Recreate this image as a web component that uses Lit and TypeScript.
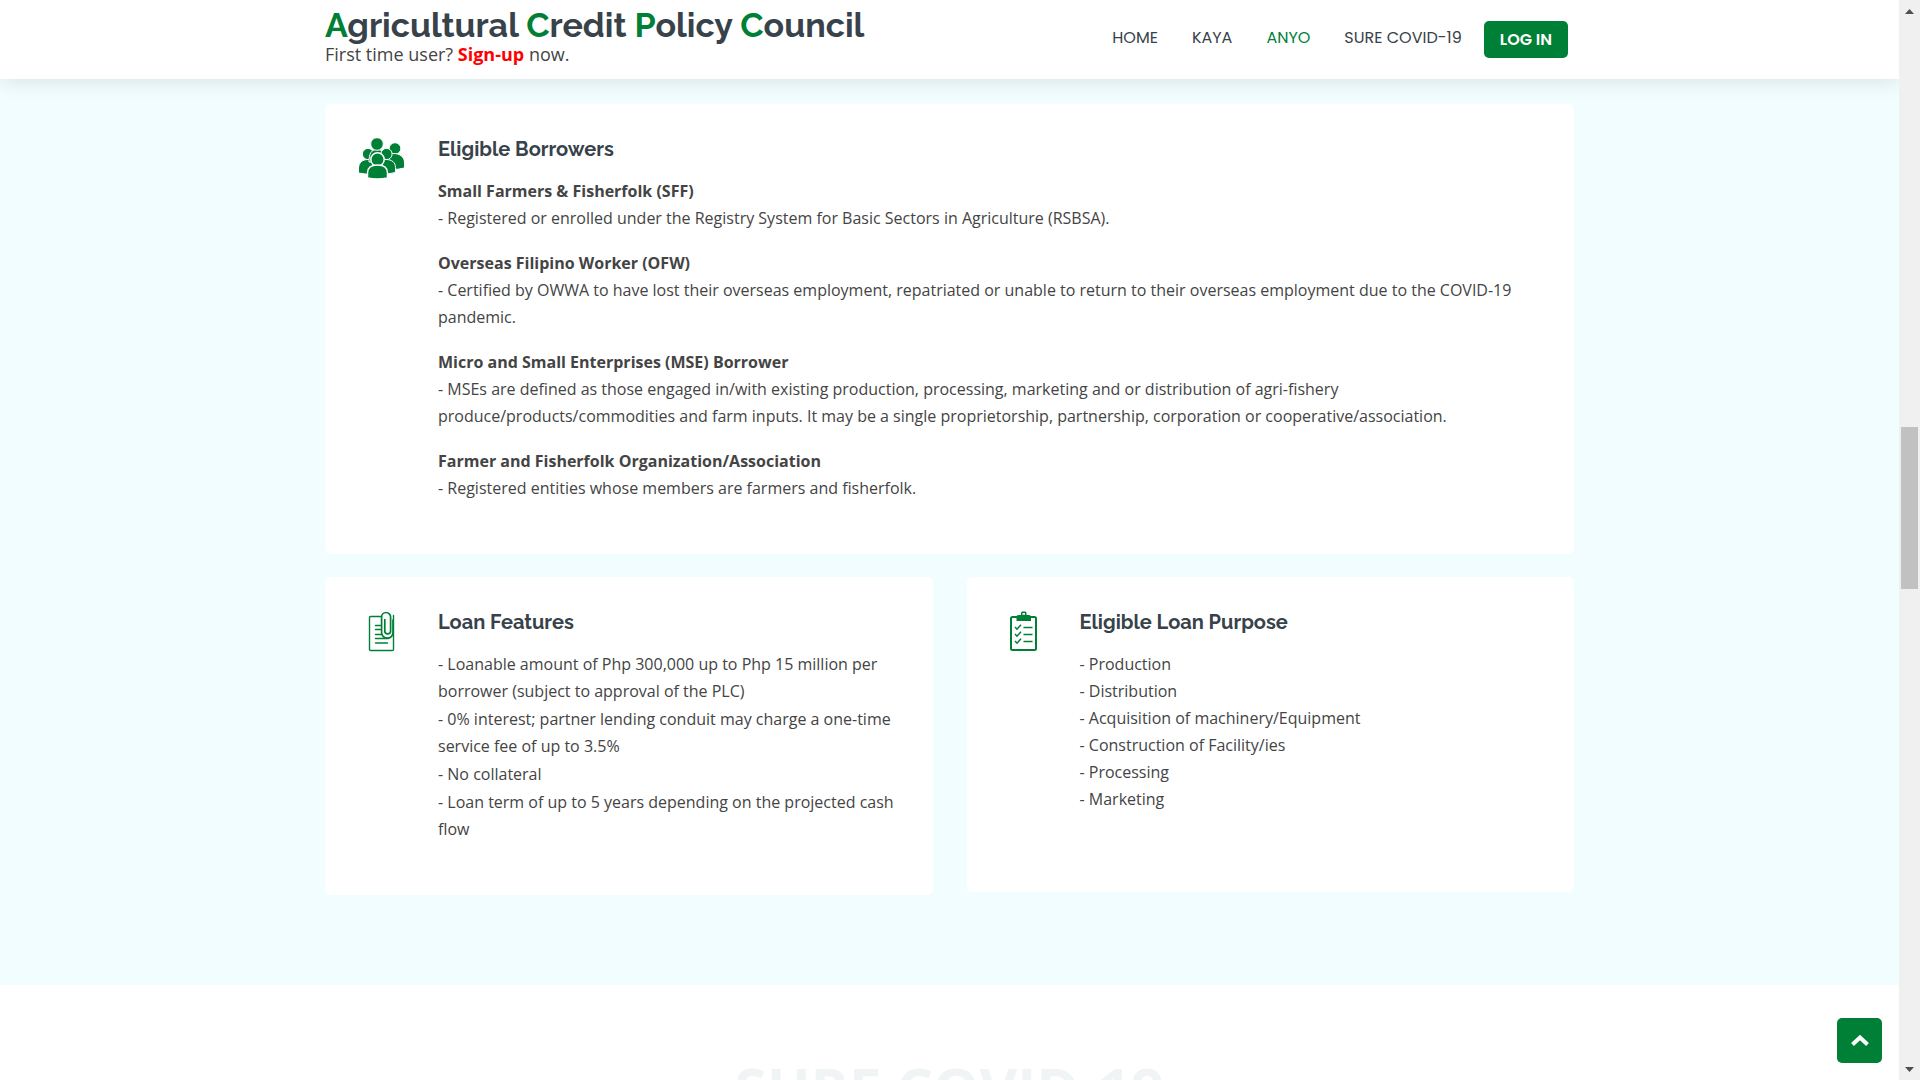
import { LitElement, html, svg, css } from "lit";
import { customElement, property } from "lit/decorators.js";

const people = svg`
  <svg viewBox="0 0 45 41" width="45" height="41" aria-hidden="true">
    <g fill="#008037" stroke="#fff" stroke-width="1">
      <circle cx="36" cy="10.5" r="5.8" />
      <path d="M26 30v-7c0-5 4-7.500 9-7.500s10.500 3 10.500 9v5.500q-8 2-12 1z" />
      <circle cx="9" cy="16" r="5.600" />
      <path d="M-.5 35v-4.500c0-6 4-9 9.500-9s9 3 9 8v6.500q-10 1-18.500-1z" />
      <path d="M10 24c0-8 2-12.500 8-12.500s8 4 8 12.500z" />
      <circle cx="18" cy="6" r="6.300" />
      <circle cx="27.500" cy="16" r="5.600" />
      <path d="M17 34v-4c0-5 4-8.500 10-8.500s9.500 3 9.500 8v5q-9 3-19.500 1z" />
    </g>
    <g fill="#008037" stroke="#fff" stroke-width="1.500">
      <circle cx="18.500" cy="21.500" r="6.700" />
      <path d="M8.500 40v-5c0-6 4-8 10-8s10 2 10 8v5q-10 2.200-20 0z" />
    </g>
  </svg>`;

const paper = svg`
  <svg viewBox="0 0 45 41" width="45" height="41" aria-hidden="true">
    <g fill="none" stroke="#008037" stroke-width="1.400" stroke-linecap="round">
      <path d="M22 5.500H11.500q-1 0-1 1v32q0 1 1 1h22q1 0 1-1V4.500" />
      <path d="M16.500 14.500h5M16.500 18.500h5M16.500 23.500h6M16.500 27.500h13M16.500 32h12" />
      <path d="M34 9v12.500a5.700 5.700 0 0 1-11.400 0V6a4.500 4.500 0 0 1 9 0v14a2.900 2.900 0 0 1-5.800 0V8.500" stroke-width="1.700" />
    </g>
  </svg>`;

const clipboard = svg`
  <svg viewBox="0 0 45 41" width="45" height="41" aria-hidden="true">
    <rect x="10" y="6" width="25" height="33" rx="1.500" fill="none" stroke="#008037" stroke-width="2" />
    <path d="M15.500 10V6q0-2 2-2h2.500V2q0-1.500 1.500-1.500h2.500q1.500 0 1.500 1.500v2h2.500q2 0 2 2v4z" fill="#008037" />
    <rect x="21.500" y="2" width="2.500" height="1.800" fill="#fff" />
    <g fill="none" stroke="#008037" stroke-width="1.500">
      <path d="M14 16l2 2.200 4-4.500M14 23l2 2.200 4-4.500M14 30l2 2.200 4-4.500" />
      <path d="M22.500 16.500h9M22.500 23.500h9M22.500 30.500h9" />
    </g>
  </svg>`;

const borrowers = [
  ["Small Farmers & Fisherfolk (SFF)", "- Registered or enrolled under the Registry System for Basic Sectors in Agriculture (RSBSA)."],
  ["Overseas Filipino Worker (OFW)", "- Certified by OWWA to have lost their overseas employment, repatriated or unable to return to their overseas employment due to the COVID-19 pandemic."],
  ["Micro and Small Enterprises (MSE) Borrower", "- MSEs are defined as those engaged in/with existing production, processing, marketing and or distribution of agri-fishery produce/products/commodities and farm inputs. It may be a single proprietorship, partnership, corporation or cooperative/association."],
  ["Farmer and Fisherfolk Organization/Association", "- Registered entities whose members are farmers and fisherfolk."],
];

const features = [
  "- Loanable amount of Php 300,000 up to Php 15 million per borrower (subject to approval of the PLC)",
  "- 0% interest; partner lending conduit may charge a one-time service fee of up to 3.5%",
  "- No collateral",
  "- Loan term of up to 5 years depending on the projected cash flow",
];

const purposes = [
  "- Production",
  "- Distribution",
  "- Acquisition of machinery/Equipment",
  "- Construction of Facility/ies",
  "- Processing",
  "- Marketing",
];

@customElement("info-card")
class InfoCard extends LitElement {
  @property() heading = "";

  static styles = css`
    :host {
      display: flex;
      gap: 34px;
      padding: 34px;
      background: #fff;
      border-radius: 5px;
    }
    .icon {
      flex: none;
      display: flex;
      align-items: flex-start;
    }
    .body {
      flex: 1;
      min-width: 0;
    }
    .heading {
      margin: 0 0 18px;
      font: 700 20px/22px Raleway, Lato, sans-serif;
      color: #37424a;
    }
  `;

  render() {
    return html`
      <div class="icon"><slot name="icon"></slot></div>
      <div class="body">
        <h4 class="heading">${this.heading}</h4>
        <slot></slot>
      </div>
    `;
  }
}

@customElement("app-root")
class AppRoot extends LitElement {
  static styles = css`
    :host {
      display: flex;
      height: 100vh;
      overflow: hidden;
      background: #fff;
      color: #444;
      font: 16px/27px "Open Sans", sans-serif;
    }
    * {
      box-sizing: border-box;
    }
    a {
      text-decoration: none;
    }
    .page {
      position: relative;
      flex: 1;
      min-width: 0;
      display: flex;
      flex-direction: column;
      overflow: hidden;
    }
    .container {
      width: 100%;
      max-width: 1249px;
      margin: 0 auto;
    }
    .header {
      position: relative;
      z-index: 1;
      flex: none;
      background: #fff;
      box-shadow: 0 3px 19px rgba(0, 0, 0, 0.1);
    }
    .bar {
      display: flex;
      justify-content: space-between;
      align-items: flex-start;
      padding: 7px 6px 14px 0;
    }
    .title {
      margin: 0;
      font: 700 34px/36px Raleway, Lato, sans-serif;
      color: #37424a;
    }
    .initial {
      color: #008037;
    }
    .tagline {
      margin: 0;
      font-size: 18px;
      line-height: 22px;
    }
    .signup {
      color: #f00;
      font-weight: 700;
    }
    .nav {
      display: flex;
      align-items: center;
      gap: 34px;
      padding-top: 14px;
      font: 400 16px/32px Poppins, Inter, sans-serif;
    }
    .link {
      padding-bottom: 4px;
      color: #37424a;
    }
    .link.active {
      color: #008037;
    }
    .login {
      margin: 0 0 0 -12px;
      padding: 0 16px;
      height: 37px;
      border: 0;
      border-radius: 5px;
      background: #008037;
      color: #fff;
      font: 600 16px/37px Poppins, Inter, sans-serif;
    }
    .program {
      flex: none;
      padding: 25px 0 90px;
      background: #f1fdff;
    }
    .cards {
      display: grid;
      grid-template-columns: 1fr 1fr;
      gap: 23px 34px;
      align-items: start;
    }
    .wide {
      grid-column: 1 / -1;
    }
    .text {
      margin: 0 0 18px;
    }
    .term {
      display: block;
      font-weight: 700;
    }
    .list {
      display: flex;
      flex-direction: column;
      list-style: none;
      margin: 0 0 18px;
      padding: 0;
    }
    .spaced {
      gap: 1px;
    }
    .trailing {
      padding-bottom: 27px;
    }
    .next {
      flex: none;
      padding-top: 63px;
    }
    .watermark {
      margin: 0;
      text-align: center;
      font-size: 58px;
      line-height: 80px;
      font-weight: 700;
      color: #f1f4f4;
    }
    .top {
      position: absolute;
      right: 17px;
      bottom: 17px;
      display: flex;
      align-items: center;
      justify-content: center;
      width: 45px;
      height: 45px;
      border-radius: 5px;
      background: #008037;
    }
    .scrollbar {
      flex: none;
      width: 21px;
      display: flex;
      flex-direction: column;
      align-items: center;
      padding: 9px 2px 8px;
      background: #f0f0f0;
    }
    .before {
      flex: 413;
    }
    .thumb {
      flex: 161;
      width: 17px;
      background: #c1c1c1;
    }
    .after {
      flex: 478;
    }
  `;

  render() {
    return html`
      <div class="page">
        <header class="header">
          <div class="container bar">
            <div>
              <h1 class="title">
                <span class="initial">A</span>gricultural <span class="initial">C</span>redit
                <span class="initial">P</span>olicy <span class="initial">C</span>ouncil
              </h1>
              <p class="tagline">First time user? <a class="signup" href="#signup">Sign-up</a> now.</p>
            </div>
            <nav class="nav">
              <a class="link" href="#home">HOME</a>
              <a class="link" href="#kaya">KAYA</a>
              <a class="link active" href="#anyo">ANYO</a>
              <a class="link" href="#sure">SURE COVID-19</a>
              <button class="login" type="button">LOG IN</button>
            </nav>
          </div>
        </header>
        <section class="program">
          <div class="container cards">
            <info-card class="wide" heading="Eligible Borrowers">
              <span slot="icon">${people}</span>
              ${borrowers.map(([term, text]) => html`<p class="text"><strong class="term">${term}</strong>${text}</p>`)}
            </info-card>
            <info-card heading="Loan Features">
              <span slot="icon">${paper}</span>
              <ul class="list spaced">${features.map((item) => html`<li>${item}</li>`)}</ul>
            </info-card>
            <info-card heading="Eligible Loan Purpose">
              <span slot="icon">${clipboard}</span>
              <ul class="list trailing">${purposes.map((item) => html`<li>${item}</li>`)}</ul>
            </info-card>
          </div>
        </section>
        <section class="next">
          <h2 class="watermark">SURE COVID-19</h2>
        </section>
        <a class="top" href="#top" aria-label="Back to top">
          <svg width="18" height="12" viewBox="0 0 18 12" aria-hidden="true">
            <path d="M1.500 9.500L9 2.500l7.500 7" fill="none" stroke="#fff" stroke-width="4" />
          </svg>
        </a>
      </div>
      <div class="scrollbar" aria-hidden="true">
        <svg width="9" height="5" viewBox="0 0 9 5"><path d="M0 5L4.500 0 9 5z" fill="#505050" /></svg>
        <div class="before"></div>
        <div class="thumb"></div>
        <div class="after"></div>
        <svg width="9" height="5" viewBox="0 0 9 5"><path d="M0 0L4.500 5 9 0z" fill="#505050" /></svg>
      </div>
    `;
  }
}
